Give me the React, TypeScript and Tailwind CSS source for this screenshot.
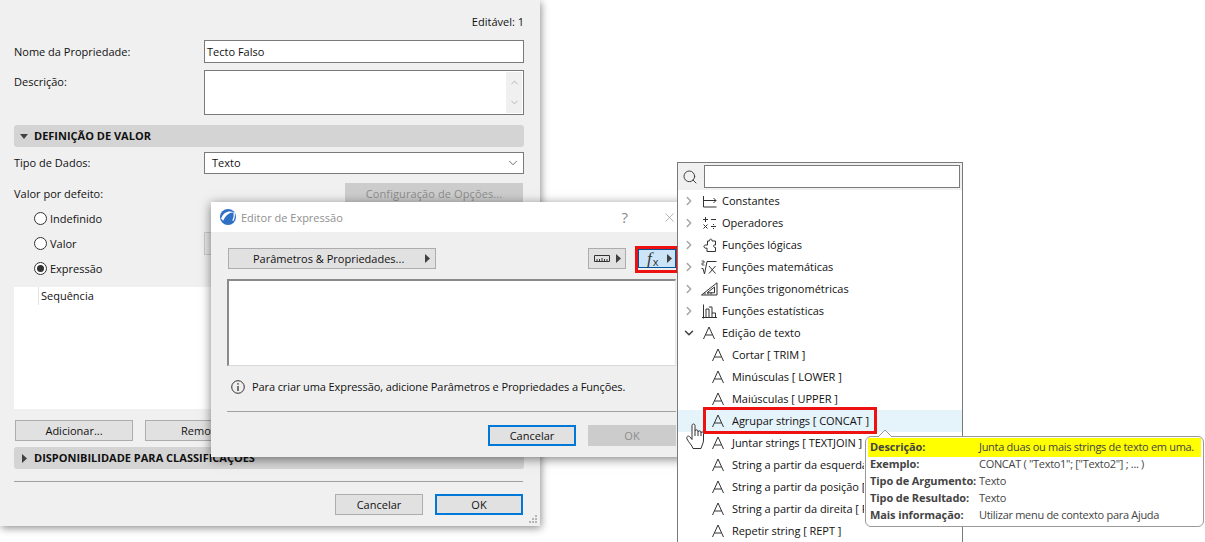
import React from "react";
import { ChevronDown, ChevronRight, Search, X } from "lucide-react";

const TriangleRight = () => (
	<svg width="5" height="9" viewBox="0 0 5 9" className="shrink-0">
		<path d="M0 0 L5 4.5 L0 9 Z" fill="#404040" />
	</svg>
);

const GreyButton = ({
	label,
	className,
	primary,
	disabled,
}: {
	label: string;
	className: string;
	primary?: boolean;
	disabled?: boolean;
}) => (
	<div
		className={`flex items-center justify-center h-[21px] ${className} ${
			primary
				? "border-2 border-[#0078d7] bg-[#e1e1e1]"
				: disabled
					? "border border-[#cccccc] bg-[#cccccc] text-[#8c8c8c]"
					: "border border-[#adadad] bg-[#e1e1e1]"
		}`}
	>
		{label}
	</div>
);

const Radio = ({ label, checked }: { label: string; checked?: boolean }) => (
	<div className="flex items-center gap-[3px] h-[25px] pl-[20px]">
		<div className="flex items-center justify-center w-[13px] h-[13px] rounded-full border border-[#333333] bg-white">
			{checked && <div className="w-[7px] h-[7px] rounded-full bg-[#333333]" />}
		</div>
		<span>{label}</span>
	</div>
);

const SectionBar = ({ title, open, className }: { title: string; open?: boolean; className: string }) => (
	<div className={`flex items-center h-[22px] rounded-[3px] bg-[#d4d4d4] font-bold text-[#111111] ${className}`}>
		<div className="flex justify-center w-[20px]">
			{open ? (
				<svg width="8" height="5" viewBox="0 0 8 5">
					<path d="M0 0 H8 L4 5 Z" fill="#404040" />
				</svg>
			) : (
				<TriangleRight />
			)}
		</div>
		<span className="pb-[2px]">{title}</span>
	</div>
);

const MainWindow = () => (
	<div className="absolute left-0 top-0 w-[540px] h-[526px] flex flex-col pl-[14px] pr-[16px] bg-[#f0f0f0] shadow-[1px_2px_8px_rgba(0,0,0,0.45)]">
		<div className="text-right h-[40px] pt-[16px]">Editável: 1</div>
		<div className="flex items-center h-[23px]">
			<span className="w-[190px]">Nome da Propriedade:</span>
			<div className="flex-1 h-full flex items-center pl-[2px] bg-white border border-[#7a7a7a]">Tecto Falso</div>
		</div>
		<div className="flex h-[45px] mt-[7px]">
			<span className="w-[190px] pt-[6px]">Descrição:</span>
			<div className="flex-1 flex justify-end p-[1px] bg-white border border-[#7a7a7a]">
				<div className="flex flex-col justify-between items-center py-[5px] w-[16px] bg-[#f0f0f0] text-[#b0b0b0]">
					<ChevronDown size={11} className="rotate-180" />
					<ChevronDown size={11} />
				</div>
			</div>
		</div>
		<SectionBar title="DEFINIÇÃO DE VALOR" open className="mt-[10px]" />
		<div className="flex items-center h-[22px] mt-[5px]">
			<span className="w-[190px] pb-[1px]">Tipo de Dados:</span>
			<div className="flex-1 h-full flex items-center justify-between pl-[7px] pr-[3px] pb-[1px] bg-white border border-[#7a7a7a]">
				Texto
				<ChevronDown size={14} strokeWidth={1.2} className="text-[#333333]" />
			</div>
		</div>
		<div className="flex items-center justify-between h-[22px] mt-[9px] pr-px">
			<span className="pb-[2px]">Valor por defeito:</span>
			<GreyButton label="Configuração de Opções..." disabled className="w-[178px] h-[22px] pb-[2px] tracking-[0.1px]" />
		</div>
		<div className="flex flex-col mt-[1px]">
			<Radio label="Indefinido" />
			<div className="relative">
				<Radio label="Valor" />
				<div className="absolute left-[190px] top-[1px] w-[100px] h-[23px] bg-[#e8e8e8] border border-[#cccccc]" />
			</div>
			<Radio label="Expressão" checked />
		</div>
		<div className="h-[122px] mt-[6px] bg-white">
			<div className="ml-[24px] h-[18px] pl-[2px] border-l border-[#e3e3e3] leading-[18px]">Sequência</div>
		</div>
		<div className="flex gap-[12px] pl-[1px] mt-[11px]">
			<GreyButton label="Adicionar..." className="w-[118px]" />
			<GreyButton label="Remover" className="w-[118px]" />
		</div>
		<SectionBar title="DISPONIBILIDADE PARA CLASSIFICAÇÕES" className="mt-[6px]" />
		<div className="h-px mt-[12px] mr-px bg-[#a0a0a0]" />
		<div className="flex justify-end gap-[12px] mt-[12px] pr-px">
			<GreyButton label="Cancelar" className="w-[88px]" />
			<GreyButton label="OK" primary className="w-[88px]" />
		</div>
		<svg width="10" height="9" viewBox="0 0 10 9" className="absolute right-[2px] bottom-[2px]">
			<g fill="#b5b5b5">
				<rect x="7" y="0" width="2" height="2" />
				<rect x="4" y="3" width="2" height="2" />
				<rect x="7" y="3" width="2" height="2" />
				<rect x="1" y="6" width="2" height="2" />
				<rect x="4" y="6" width="2" height="2" />
				<rect x="7" y="6" width="2" height="2" />
			</g>
		</svg>
	</div>
);

const ExpressionDialog = () => (
	<div className="absolute left-[211px] top-[202px] w-[474px] h-[255px] flex flex-col bg-[#efefef] shadow-[0_2px_10px_rgba(0,0,0,0.5)]">
		<div className="flex items-center h-[30px] bg-white text-[#8f8f8f] pl-[9px]">
			<svg width="16" height="16" viewBox="0 0 15 15" className="mr-[5px]">
				<circle cx="7.5" cy="7.5" r="7.5" fill="#2f6fc4" />
				<path d="M1 9 C3 3 8 1 13 3 C9 3 5 6 3 11 Z" fill="#ffffff" />
				<path d="M13 3 C14 6 13 9 12 11" stroke="#ffffff" strokeWidth="1.2" fill="none" />
			</svg>
			Editor de Expressão
			<span className="ml-auto mr-[34px] text-[15px] text-[#8a8a8a]">?</span>
			<X size={15} strokeWidth={1} className="mr-[8px] text-[#8a8a8a]" />
		</div>
		<div className="flex items-center pl-[17px] pr-[9px] mt-[16px] h-[21px]">
			<div className="flex items-center justify-between w-[208px] h-full pl-[24px] pr-[5px] bg-[#e1e1e1] border border-[#adadad]">
				Parâmetros &amp; Propriedades...
				<TriangleRight />
			</div>
			<div className="flex items-center justify-center gap-[6px] w-[38px] h-full ml-auto bg-[#e1e1e1] border border-[#adadad]">
				<svg width="16" height="7" viewBox="0 0 16 7">
					<path d="M0.5 0.5 H15.5 V6.5 H0.5 Z M3 6 V4 M5.5 6 V4 M8 6 V3 M10.5 6 V4 M13 6 V4" stroke="#333333" fill="none" />
				</svg>
				<TriangleRight />
			</div>
			<div className="relative flex items-center w-[38px] h-[19px] ml-[12px] bg-[#cce4f7] border border-[#005499]">
				<span className="ml-[8px] text-[17px] leading-none italic text-[#333333] [font-family:'Liberation_Serif',serif]">f</span>
				<span className="ml-px mt-[6px] text-[11px] leading-none text-[#333333]">x</span>
				<span className="ml-auto mr-[3px]">
					<TriangleRight />
				</span>
				<div className="absolute -left-[4px] -top-[4px] w-[44px] h-[27px] border-[3px] border-[#ee1111]" />
			</div>
		</div>
		<div className="h-[87px] ml-[16px] mr-[9px] mt-[10px] bg-white border-2 border-b border-r border-[#8a8a8a] border-r-[#e8e8e8] border-b-[#d8d8d8]" />
		<div className="flex items-center h-[21px] mt-[10px] ml-[20px] gap-[7px] tracking-[-0.1px]">
			<svg width="14" height="14" viewBox="0 0 14 14">
				<circle cx="7" cy="7" r="6.3" stroke="#333333" fill="none" />
				<path d="M7 6 V11" stroke="#333333" strokeWidth="1.3" />
				<rect x="6.3" y="3.2" width="1.4" height="1.4" fill="#333333" />
			</svg>
			Para criar uma Expressão, adicione Parâmetros e Propriedades a Funções.
		</div>
		<div className="h-px ml-[16px] mr-[9px] mt-[14px] bg-[#a0a0a0]" />
		<div className="flex justify-end gap-[12px] mr-[9px] mt-[13px]">
			<GreyButton label="Cancelar" primary className="w-[88px]" />
			<GreyButton label="OK" disabled className="w-[88px]" />
		</div>
	</div>
);

const LetterIcon = () => (
	<svg width="14" height="14" viewBox="0 0 14 14" className="shrink-0">
		<path d="M1.5 13 L7 1 L12.5 13 M3.5 9 H10.5" stroke="#333333" strokeWidth="1" fill="none" />
	</svg>
);

const stroke = { stroke: "#333333", fill: "none", strokeWidth: 1 };

const categories: { label: string; icon: React.ReactNode }[] = [
	{
		label: "Constantes",
		icon: (
			<svg width="15" height="14" viewBox="0 0 15 14">
				<path d="M1.5 2 V13 H14.5 M1.5 6.5 H14 M11.5 4 L14 6.5 L11.5 9" {...stroke} />
			</svg>
		),
	},
	{
		label: "Operadores",
		icon: (
			<svg width="15" height="14" viewBox="0 0 15 14">
				<path d="M1 3.5 H6 M3.5 1 V6 M9 3.5 H14 M1.5 8.5 L5.5 12.5 M5.5 8.5 L1.5 12.5 M9 10.5 H14" {...stroke} />
				<rect x="11" y="8" width="1" height="1" fill="#333333" />
				<rect x="11" y="12" width="1" height="1" fill="#333333" />
			</svg>
		),
	},
	{
		label: "Funções lógicas",
		icon: (
			<svg width="15" height="15" viewBox="0 0 15 15">
				<path d="M5.5 3 H7.5 C6.5 1 10.5 0 10 3 H13.5 V7 C11 6 11 10 13.5 9.5 V13.5 H5 V10 C2.5 11.5 0 7 4 7 H5.5 Z" {...stroke} />
			</svg>
		),
	},
	{
		label: "Funções matemáticas",
		icon: (
			<svg width="16" height="15" viewBox="0 0 16 15">
				<path d="M0.5 8.5 H2 L3.5 14 L6 1.5 H15.5 M8 6 L14.5 13.5 M14.5 6 L8 13.5" {...stroke} />
				<path d="M0.5 1 H3 V3 H1 V5 H3.5" stroke="#333333" strokeWidth="0.8" fill="none" />
			</svg>
		),
	},
	{
		label: "Funções trigonométricas",
		icon: (
			<svg width="17" height="14" viewBox="0 0 17 14">
				<path d="M0.5 13 L16 0.8 V13 Z M6 10.8 L13.5 5 V10.8 Z M4 12.5 V10.5 M7 12.5 V10.5 M10 12.5 V10.5" {...stroke} />
			</svg>
		),
	},
	{
		label: "Funções estatísticas",
		icon: (
			<svg width="15" height="15" viewBox="0 0 15 15">
				<path d="M1.5 0.5 V14.5 M0 13.5 H15 M4 13.5 V5 H7 V13.5 M7 3 H10 V13.5 M10 9 H13.5 V13.5" {...stroke} />
			</svg>
		),
	},
];

const textFunctions = [
	"Cortar [ TRIM ]",
	"Minúsculas [ LOWER ]",
	"Maiúsculas [ UPPER ]",
	"Agrupar strings [ CONCAT ]",
	"Juntar strings [ TEXTJOIN ]",
	"String a partir da esquerda [ LEFT ]",
	"String a partir da posição [ MID ]",
	"String a partir da direita [ RIGHT ]",
	"Repetir string [ REPT ]",
];

const FunctionsPopup = () => (
	<div className="absolute left-[677px] top-[162px] w-[286px] h-[380px] flex flex-col bg-white border-x border-t border-[#7a7a7a] overflow-hidden">
		<div className="flex items-center h-[27px] shrink-0 pr-[2px] bg-[#f0f0f0]">
			<Search size={16} strokeWidth={1.4} className="ml-[4px] mr-[6px] text-[#333333]" />
			<div className="flex-1 h-[23px] bg-white border border-[#7a7a7a]" />
		</div>
		{categories.map((c) => (
			<div key={c.label} className="flex items-center h-[22px] shrink-0">
				<ChevronRight size={14} strokeWidth={2.6} className="ml-[4px] w-[14px] text-[#a6a6a6]" />
				<div className="flex justify-center w-[26px]">{c.icon}</div>
				<span className="pb-[2px]">{c.label}</span>
			</div>
		))}
		<div className="flex items-center h-[22px] shrink-0">
			<ChevronDown size={14} strokeWidth={2.6} className="ml-[4px] w-[14px] text-[#444444]" />
			<div className="flex justify-center w-[26px]">
				<LetterIcon />
			</div>
			<span className="pb-[2px]">Edição de texto</span>
		</div>
		{textFunctions.map((t) => (
			<div
				key={t}
				className={`flex items-center h-[22px] shrink-0 pl-[33px] gap-[7px] whitespace-nowrap ${
					t.includes("CONCAT") ? "bg-[#e5f3fb]" : ""
				}`}
			>
				<LetterIcon />
				{/* the tooltip covers the end of the long names */}
				<span className={`pb-[2px] tracking-[-0.05px] ${t.startsWith("String") ? "w-[132px] overflow-hidden" : ""}`}>{t}</span>
			</div>
		))}
	</div>
);

const tooltipRows = [
	["Descrição:", "Junta duas ou mais strings de texto em uma."],
	["Exemplo:", "CONCAT ( \"Texto1\"; [\"Texto2\"] ; ... )"],
	["Tipo de Argumento:", "Texto"],
	["Tipo de Resultado:", "Texto"],
	["Mais informação:", "Utilizar menu de contexto para Ajuda"],
];

const Tooltip = () => (
	<div className="absolute left-[865px] top-[436px] w-[339px] h-[91px] pt-[1px] px-[2px] bg-white border border-[#9a9a9a] rounded-[6px] text-[#444444]">
		<svg width="14" height="7" viewBox="0 0 14 7" className="absolute left-[12px] -top-[7px]">
			<path d="M0 7 L7 0 L14 7" fill="#ffffff" stroke="#9a9a9a" />
		</svg>
		{tooltipRows.map(([k, v], i) => (
			<div
				key={k}
				className={`flex items-center pl-[2px] whitespace-nowrap ${i === 0 ? "h-[19px] bg-[#ffff00]" : "h-[17px] pb-[2px]"}`}
			>
				<span className="w-[109px] pb-[2px] font-bold tracking-[-0.1px]">{k}</span>
				<span className="pb-[2px] tracking-[-0.3px]">{v}</span>
			</div>
		))}
	</div>
);

const HandCursor = () => (
	<svg width="19" height="27" viewBox="0 0 19 27" className="absolute left-[686px] top-[423px]">
		<path
			d="M6 14 V2.5 C6 0.5 9 0.5 9 2.5 V8 C9 6.5 12 6.5 12 8 V9 C12 7.5 15 7.5 15 9 V10 C15 8.5 17.5 8.5 17.5 10.5 V17 C17.5 20 16 22 15 25.5 H7 C6 22 3 20 1 16 C0 13.5 2.5 12 4 14 L6 16.5 Z"
			fill="#ffffff"
			stroke="#333333"
		/>
		<path d="M9 8 V13 M12 9 V13 M15 10 V13" stroke="#333333" fill="none" />
	</svg>
);

export default function App() {
	return (
		<div className="relative w-[1205px] h-[542px] overflow-hidden bg-white text-[11px] leading-none text-[#111111] [font-family:'Open_Sans',sans-serif]">
			<MainWindow />
			<ExpressionDialog />
			<FunctionsPopup />
			<div className="absolute left-[703px] top-[407px] w-[174px] h-[27px] border-[3px] border-[#ee1111]" />
			<HandCursor />
			<Tooltip />
		</div>
	);
}
